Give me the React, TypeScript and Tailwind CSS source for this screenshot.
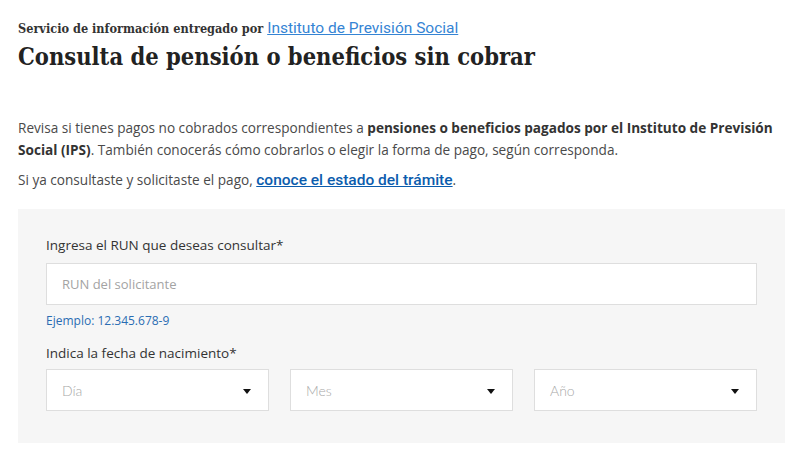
import { useState } from "react"

const slab = "font-['DejaVu_Serif',serif] [font-stretch:condensed]"
const body = "font-['Open_Sans',sans-serif]"

export default function App() {
  const [run, setRun] = useState("")

  return (
    <main className="w-[800px] h-[454px] bg-white px-[18px] pt-[18px] overflow-hidden">
      {/* HEADER */}
      <header>
        <p className={`${slab} text-[12.6px] font-bold text-[#333] leading-[20px]`}>
          Servicio de información entregado por{" "}
          <a href="#" className="font-['Roboto',sans-serif] [font-stretch:normal] font-normal text-[15.5px] text-[#3584d4] underline">
            Instituto de Previsión Social
          </a>
        </p>
        <h1 className={`${slab} text-[23.5px] font-bold text-[#222] leading-[32px] mt-[2px]`}>
          Consulta de pensión o beneficios sin cobrar
        </h1>
      </header>

      {/* INTRO */}
      <section className={`${body} text-[13.6px] text-[#4a4a4a] mt-[44px]`}>
        <p className="leading-[21.5px]">
          Revisa si tienes pagos no cobrados correspondientes a{" "}
          <strong className="text-[#333]">pensiones o beneficios pagados por el Instituto de Previsión Social (IPS)</strong>.
          También conocerás cómo cobrarlos o elegir la forma de pago, según corresponda.
        </p>
        <p className="leading-[22px] mt-[9px]">
          Si ya consultaste y solicitaste el pago,{" "}
          <a href="#" className="font-['Roboto',sans-serif] font-medium text-[15.5px] text-[#0b5cad] underline">
            conoce el estado del trámite
          </a>
          .
        </p>
      </section>

      {/* FORM */}
      <form className={`${body} mt-[18px] w-[767px] bg-[#f6f6f6] px-[28px] pt-[26px] pb-[32px]`}>
        <label className="block text-[13.5px] text-[#333] leading-[20px]">
          Ingresa el RUN que deseas consultar*
        </label>
        <input
          value={run}
          onChange={(e) => setRun(e.target.value)}
          placeholder="RUN del solicitante"
          className="mt-[8px] w-full h-[42px] bg-white border border-[#dedede] px-[15px] text-[13px] text-[#333] placeholder:text-[#a3a3a3] outline-none"
        />
        <p className="mt-[8px] text-[12px] text-[#2a6db3] leading-[16px]">Ejemplo: 12.345.678-9</p>

        <label className="block mt-[14px] text-[13.5px] text-[#333] leading-[20px]">
          Indica la fecha de nacimiento*
        </label>
        <div className="mt-[6px] grid grid-cols-3 gap-[21px]">
          <Select placeholder="Día" />
          <Select placeholder="Mes" />
          <Select placeholder="Año" />
        </div>
      </form>
    </main>
  )
}

/* ---------- Select ---------- */

function Select({ placeholder }: { placeholder: string }) {
  return (
    <div className="relative h-[42px] bg-white border border-[#dedede] flex items-center px-[15px]">
      <span className="font-['Lato',sans-serif] font-light text-[14px] text-[#a8a8a8]">{placeholder}</span>
      <svg className="absolute right-[17px] top-[19px]" width="8" height="5" viewBox="0 0 8 5">
        <path d="M0 0h8L4 5z" fill="#111" />
      </svg>
    </div>
  )
}
